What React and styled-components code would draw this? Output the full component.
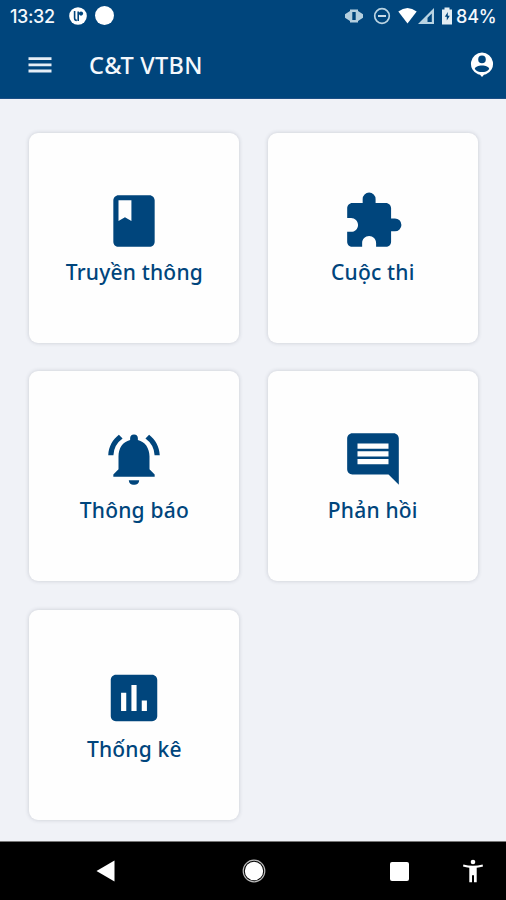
import styled, { createGlobalStyle } from "styled-components";
import {
    MdClass,
    MdExtension,
    MdComment,
    MdAssessment,
} from "react-icons/md";

const BellIcon = () => (
    <svg viewBox="0 0 24 24" fill="currentColor">
        <path d="M7.58 4.08 6.15 2.65C3.75 4.48 2.17 7.3 2.03 10.5h2a8.445 8.445 0 0 1 3.55-6.42zM19.97 10.5h2c-.15-3.2-1.73-6.02-4.12-7.85l-1.42 1.43a8.495 8.495 0 0 1 3.54 6.42z" />
        <path d="M18 11c0-3.07-1.64-5.64-4.5-6.32V4a1.5 1.5 0 0 0-3 0v.68C7.63 5.36 6 7.92 6 11v5l-2 2v.9h16V18l-2-2zM12 22c1.1 0 2-.7 2-1.8h-4c0 1.1.9 1.8 2 1.8z" />
    </svg>
);

const MenuIcon = () => (
    <svg width="24" height="18" viewBox="0 0 24 18">
        <path d="M.5 2.6h23M.5 8.8h23M.5 15h23" stroke="#e6eef6" strokeWidth="2.8" />
    </svg>
);

const ProfileIcon = () => (
    <svg width="24" height="26" viewBox="0 0 24 26">
        <path fill="#fff" fillRule="evenodd" d="M12 .6a11.2 11.2 0 0 0-4 21.6l2 .6 2 2.2 2-2.2 2-.6A11.2 11.2 0 0 0 12 .6zM12 3.6a3.8 3.8 0 1 1 0 7.6 3.8 3.8 0 0 1 0-7.6zM12 13.4c3.6 0 7.2 1.3 7.2 3.5-1.7 2.3-4.3 3.2-7.2 3.2s-5.5-.9-7.2-3.2c0-2.2 3.6-3.5 7.2-3.5z" />
    </svg>
);

const menus = [
    { label: "Truyền thông", Icon: MdClass },
    { label: "Cuộc thi", Icon: MdExtension },
    { label: "Thông báo", Icon: BellIcon },
    { label: "Phản hồi", Icon: MdComment },
    { label: "Thống kê", Icon: MdAssessment },
];

const StatusBar = () => (
    <Status>
        <Clock>13:32</Clock>
        <svg width="18" height="18" viewBox="0 0 18 18">
            <circle cx="9" cy="9" r="8.8" fill="#fff" />
            <path d="M5.6 4v7c0 1.4.8 2.4 2.2 2.4M9.2 14V4.5" fill="none" stroke="#00457c" strokeWidth="1.6" />
            <circle cx="12" cy="6.6" r="2.1" fill="#00457c" />
        </svg>
        <Dot />
        <StatusIcons>
            <svg width="20" height="18" viewBox="0 0 20 18">
                <g fill="#b4cfdf">
                    <path d="M6 4v10L1 10.8V7.2zM14 4v10l5-3.2V7.2z" />
                    <path d="M6 2.5h8v13H6zM8.3 5v8h3.4V5z" fillRule="evenodd" />
                </g>
            </svg>
            <svg width="18" height="18" viewBox="0 0 18 18">
                <circle cx="9" cy="9" r="7.3" fill="none" stroke="#b9d3e2" strokeWidth="1.7" />
                <path d="M5 9h8" stroke="#d5e4ee" strokeWidth="1.9" />
            </svg>
            <svg width="37" height="18" viewBox="0 0 37 18">
                <path d="M.3 4.5Q9.5-2.5 18.7 4.5L9.5 16.5z" fill="#fff" />
                <path d="M36 1v16H20zM33.8 6.5l-4.3 4.3V15h4.3z" fill="#b9d3e2" fillRule="evenodd" />
            </svg>
            <svg width="12" height="18" viewBox="0 0 12 18">
                <path d="M1 2.5h2.5V.5h5v2H11v15H1z" fill="#e3edf3" />
                <path d="M6.8 5 3.8 9.8h2v3.7l3-4.7h-2z" fill="#00457c" />
            </svg>
        </StatusIcons>
        <Battery>84%</Battery>
    </Status>
);

const NavigationBar = () => (
    <NavBar>
        <svg width="19" height="22" viewBox="0 0 19 22">
            <path d="M18.5.5v21L.5 11z" fill="#fff" />
        </svg>
        <svg width="24" height="24" viewBox="0 0 24 24">
            <circle cx="12" cy="12" r="10.8" fill="none" stroke="#bbb" strokeWidth="1.2" />
            <circle cx="12" cy="12" r="9.2" fill="#fff" />
        </svg>
        <Square />
        <svg width="20" height="24" viewBox="0 0 20 24">
            <circle cx="10" cy="3" r="2.3" fill="#fff" />
            <path d="M.4 5.5C6.5 7.3 13.5 7.3 19.6 5.5L20 7.6c-2 .6-4.3 1-6.3 1.2v14.4h-2.7v-7H9v7H6.3V8.8C4.3 8.6 2 8.2 0 7.6z" fill="#fff" />
        </svg>
    </NavBar>
);

const App = () => {
    return (
        <>
            <GlobalStyle />
            <Screen>
                <Header>
                    <StatusBar />
                    <AppBar>
                        <MenuIcon />
                        <Title>C&amp;T VTBN</Title>
                        <ProfileIcon />
                    </AppBar>
                </Header>
                <Grid>
                    {menus.map(({ label, Icon }) => (
                        <Card key={label}>
                            <Icon />
                            <Label>{label}</Label>
                        </Card>
                    ))}
                </Grid>
                <NavigationBar />
            </Screen>
        </>
    );
};

const GlobalStyle = createGlobalStyle`
    * { box-sizing: border-box; }

    body {
        margin: 0;
    }

    svg {
        display: block;
        flex-shrink: 0;
    }
`

const Screen = styled.div`
    height: 900px;
    display: flex;
    flex-direction: column;
    overflow: hidden;
    background: #f0f2f7;
    font-family: "Noto Sans", sans-serif;
`

const Header = styled.header`
    height: 99px;
    background: #00457c;
    border-bottom: 1px solid #1c4f85;
    color: #f4f8fc;
`

const Status = styled.div`
    height: 31px;
    display: flex;
    align-items: center;
    padding: 0 9px 0 10px;
    font-family: Inter, sans-serif;
    font-weight: 550;
    white-space: nowrap;
`

const Clock = styled.span`
    width: 59px;
    font-size: 18px;
    line-height: 31px;
    letter-spacing: -0.4px;
    padding-top: 2px;
`

const Dot = styled.i`
    width: 19px;
    height: 19px;
    margin-left: 8px;
    border-radius: 50%;
    background: #fff;
`

const StatusIcons = styled.div`
    display: flex;
    margin-left: auto;

    svg:nth-child(2) { margin-left: 9px; }
    svg:nth-child(3) { margin-left: 7px; }
    svg:nth-child(4) { margin-left: 6px; }
`

const Battery = styled.span`
    width: 41px;
    margin-left: 3px;
    padding-top: 2px;
    font-size: 18px;
    letter-spacing: -0.2px;
`

const AppBar = styled.div`
    height: 67px;
    display: flex;
    align-items: center;
    padding: 0 12px 0 28px;
`

const Title = styled.h1`
    flex: 1;
    margin: 0 0 0 37px;
    font-size: 23.5px;
    font-weight: 550;
    line-height: 32px;
    letter-spacing: 0.3px;
`

const Grid = styled.main`
    flex: 1;
    display: grid;
    grid-template-columns: repeat(2, 210px);
    grid-auto-rows: 210px;
    align-content: start;
    gap: 28.4px;
    padding: 33.8px 0 0 29.4px;
`

const Card = styled.div`
    display: flex;
    flex-direction: column;
    align-items: center;
    padding-top: 57px;
    background: #fefefe;
    border-radius: 9px;
    box-shadow: 0 0 4px rgba(40, 50, 70, 0.2);
    color: #00457c;

    svg {
        width: 62px;
        height: 62px;
    }
`

const Label = styled.span`
    font-size: 21px;
    font-weight: 500;
    line-height: 30px;
    letter-spacing: 0.2px;
    margin-top: 5px;
    white-space: nowrap;
`

const NavBar = styled.nav`
    height: 59px;
    display: flex;
    align-items: center;
    padding-left: 96px;
    background: #000;
    border-top: 1px solid #777;

    svg:nth-child(2) { margin-left: 127px; }
    svg:nth-child(4) { margin-left: 54px; }
`

const Square = styled.i`
    width: 19px;
    height: 19px;
    margin-left: 124px;
    border-radius: 2px;
    background: #fff;
`

export default App;
